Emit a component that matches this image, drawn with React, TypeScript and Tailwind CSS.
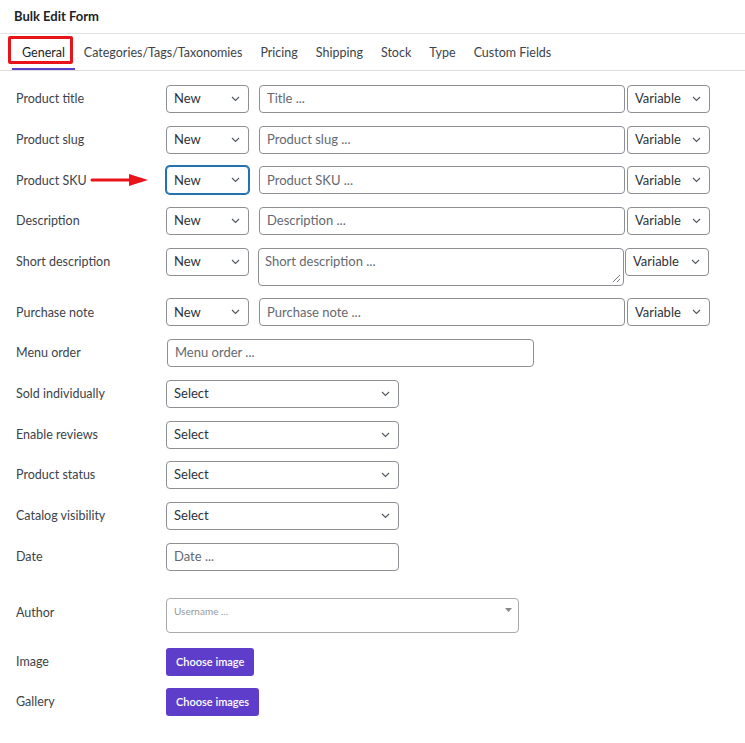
import React from "react";

const font = { fontFamily: "Lato, 'Noto Sans', sans-serif" };

function Chevron() {
  return (
    <svg width="9" height="6" viewBox="0 0 9 6" className="shrink-0">
      <path d="M1 1 L4.5 4.5 L8 1" fill="none" stroke="#50575e" strokeWidth="1.1" />
    </svg>
  );
}

function Sel({ value, w, focus }: { value: string; w: string; focus?: boolean }) {
  return (
    <div
      className={`${w} h-[28px] rounded-[4px] border bg-white flex items-center justify-between pl-[7px] pr-[8px] text-[13px] text-[#2c3338] ${
        focus ? "border-[#2271b1] shadow-[0_0_0_1px_#2271b1]" : "border-[#8c8f94]"
      }`}
    >
      <span>{value}</span>
      <Chevron />
    </div>
  );
}

function Inp({ ph, w }: { ph: string; w: string }) {
  return (
    <div className={`${w} h-[28px] rounded-[4px] border border-[#8c8f94] bg-white flex items-center px-[7px] text-[13px] text-[#646970]`}>
      {ph}
    </div>
  );
}

function Label({ children }: { children: React.ReactNode }) {
  return <div className="w-[150px] shrink-0 pt-[1px] text-[12.5px] text-[#3c434a]">{children}</div>;
}

function TripleRow({ label, ph, arrow }: { label: string; ph: string; arrow?: boolean }) {
  return (
    <div className="flex items-center h-[28px]">
      <div className="w-[150px] shrink-0 pt-[1px] flex items-center text-[12.5px] text-[#3c434a] relative">
        {label}
        {arrow && (
          <svg className="absolute left-[74px] top-1/2 -translate-y-1/2" width="60" height="14" viewBox="0 0 60 14">
            <line x1="2" y1="7" x2="42" y2="7" stroke="#e8141a" strokeWidth="3" strokeLinecap="round" />
            <path d="M39 1 L58 7 L39 13 Z" fill="#e8141a" />
          </svg>
        )}
      </div>
      <Sel value="New" w="w-[83px]" focus={arrow} />
      <div className="w-[10px]" />
      <Inp ph={ph} w="w-[366px]" />
      <div className="w-[2px]" />
      <Sel value="Variable" w="w-[83px]" />
    </div>
  );
}

function SimpleRow({ label, children }: { label: string; children: React.ReactNode }) {
  return (
    <div className="flex items-center h-[28px]">
      <Label>{label}</Label>
      {children}
    </div>
  );
}

export default function App() {
  const tabs = ["General", "Categories/Tags/Taxonomies", "Pricing", "Shipping", "Stock", "Type", "Custom Fields"];
  return (
    <div className="w-[745px] h-[743px] bg-white relative overflow-hidden" style={font}>
      <div className="h-[34px] flex items-center px-[14px] text-[13px] font-bold text-[#1d2327] border-b border-[#e2e4e7]">
        Bulk Edit Form
      </div>
      <div className="relative h-[37px] flex items-end px-[12px] border-b border-[#dcdcde]">
        {tabs.map((t, i) => (
          <div
            key={t}
            className={`h-[33px] pt-[2px] flex items-center text-[12.5px] ${
              i === 0 ? "px-[10px] text-[#1d2327] border-b-2 border-[#5b3fcb]" : "px-[9px] text-[#3c434a] border-b-2 border-transparent"
            }`}
          >
            {t}
          </div>
        ))}
        <div className="absolute left-[8px] top-[2px] w-[65px] h-[28px] border-[3px] border-[#e8141a] rounded-[2px]" />
      </div>

      <div className="pl-[16px] pt-[14px] flex flex-col gap-[12.7px]">
        <TripleRow label="Product title" ph="Title ..." />
        <TripleRow label="Product slug" ph="Product slug ..." />
        <TripleRow label="Product SKU" ph="Product SKU ..." arrow />
        <TripleRow label="Description" ph="Description ..." />
        <div className="flex items-start h-[38px]">
          <div className="w-[150px] shrink-0 h-[28px] pt-[1px] flex items-center text-[12.5px] text-[#3c434a]">Short description</div>
          <Sel value="New" w="w-[83px]" />
          <div className="w-[9px]" />
          <div className="w-[366px] h-[38px] rounded-[4px] border border-[#8c8f94] bg-white px-[6px] pt-[3px] text-[13px] text-[#646970] relative">
            Short description ...
            <svg className="absolute right-[2px] bottom-[2px]" width="9" height="9" viewBox="0 0 9 9">
              <line x1="8" y1="1" x2="1" y2="8" stroke="#777" strokeWidth="1" />
              <line x1="8" y1="5" x2="5" y2="8" stroke="#777" strokeWidth="1" />
            </svg>
          </div>
          <div className="w-[1px]" />
          <Sel value="Variable" w="w-[84px]" />
        </div>
        <TripleRow label="Purchase note" ph="Purchase note ..." />
        <SimpleRow label="Menu order">
          <div className="w-[1px]" />
          <Inp ph="Menu order ..." w="w-[367px]" />
        </SimpleRow>
        <SimpleRow label="Sold individually">
          <Sel value="Select" w="w-[233px]" />
        </SimpleRow>
        <SimpleRow label="Enable reviews">
          <Sel value="Select" w="w-[233px]" />
        </SimpleRow>
        <SimpleRow label="Product status">
          <Sel value="Select" w="w-[233px]" />
        </SimpleRow>
        <SimpleRow label="Catalog visibility">
          <Sel value="Select" w="w-[233px]" />
        </SimpleRow>
        <SimpleRow label="Date">
          <Inp ph="Date ..." w="w-[233px]" />
        </SimpleRow>
        <div className="flex items-start h-[35px] mt-[15px]">
          <div className="w-[150px] shrink-0 pt-[6px] text-[12.5px] text-[#3c434a]">Author</div>
          <div className="w-[353px] h-[35px] rounded-[4px] border border-[#aaa] bg-white relative px-[7px] pt-[5px] text-[10px] text-[#999]">
            Username ...
            <svg className="absolute right-[6px] top-[9px]" width="7" height="4" viewBox="0 0 7 4">
              <path d="M0 0 L7 0 L3.5 4 Z" fill="#888" />
            </svg>
          </div>
        </div>
        <div className="flex flex-col gap-[12px] mt-[2px]">
          <SimpleRow label="Image">
            <button className="h-[28px] px-[10px] rounded-[3px] bg-[#5e3dcb] text-white text-[11px] font-semibold">Choose image</button>
          </SimpleRow>
          <SimpleRow label="Gallery">
            <button className="h-[28px] px-[10px] rounded-[3px] bg-[#5e3dcb] text-white text-[11px] font-semibold">Choose images</button>
          </SimpleRow>
        </div>
      </div>
    </div>
  );
}
